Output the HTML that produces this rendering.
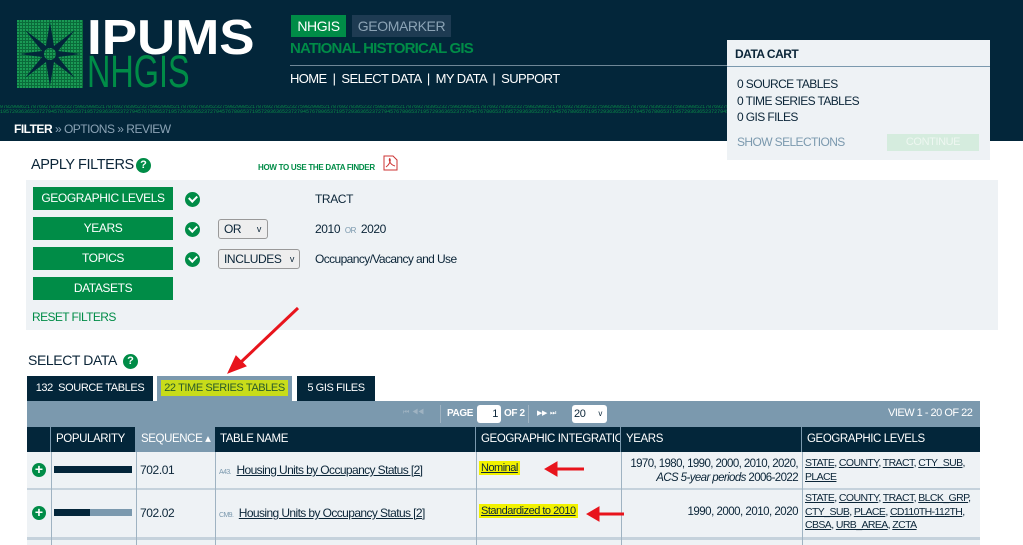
<!DOCTYPE html>
<html><head><meta charset="utf-8"><style>
*{margin:0;padding:0;box-sizing:border-box}
body{width:1023px;height:545px;overflow:hidden;background:#fff;font-family:"Liberation Sans",sans-serif;position:relative;color:#0b2538;letter-spacing:-0.4px}
.a{position:absolute;white-space:nowrap}
.hdr{left:0;top:0;width:1023px;height:141px;background:#03263a}
.btn{background:#008c47;color:#fff;font-size:12px;text-align:center;line-height:23px;width:140px;height:23px;left:33px}
.chk{width:15px;height:15px;border-radius:50%;background:#008c47;left:185px}
.chk:after{content:"";position:absolute;left:4px;top:3px;width:6px;height:4px;border-left:2px solid #fff;border-bottom:2px solid #fff;transform:rotate(-45deg)}
.sel{border:1px solid #999;border-radius:3px;background:#eee;font-size:12px;padding-left:5px;line-height:18px;height:20px}
.th{background:#03263a;color:#fff;font-size:11.5px;line-height:25px;padding-left:5px;top:427px;height:25px;border-right:1px solid #7b99ae;overflow:hidden}
.u{text-decoration:underline;color:#0b2538}
.plus{width:14px;height:14px;border-radius:50%;background:#008c47;color:#fff;font-size:14px;line-height:13px;text-align:center;font-weight:bold;left:32px;letter-spacing:0}
.hl{background:#f2f200;padding:1px 2px}
.lv{font-size:10.5px;letter-spacing:-0.6px;line-height:13.5px}
</style></head><body>
<div class="a hdr"></div>
<svg class="a" style="left:17px;top:20px" width="66" height="68">
<defs><pattern id="p" width="3" height="3" patternUnits="userSpaceOnUse"><rect width="3" height="3" fill="#0a6b3a"/><rect width="2" height="2" fill="#1a9a55"/></pattern></defs>
<rect width="66" height="68" fill="url(#p)"/>
<path d="M33 2 L37 26 L58 10 L41 31 L64 34 L41 37 L58 58 L37 42 L33 66 L29 42 L8 58 L25 37 L2 34 L25 31 L8 10 L29 26Z" fill="#03263a"/>
<circle cx="33" cy="34" r="6" fill="url(#p)"/>
</svg>
<div class="a" style="left:87px;top:14px;font-weight:bold;font-size:49px;line-height:48px;color:#fff;letter-spacing:0;transform:scaleX(1.08);transform-origin:left">IPUMS</div>
<div class="a" style="left:87px;top:49px;font-size:45px;line-height:46px;color:#008c47;letter-spacing:0;transform:scaleX(0.72);transform-origin:left">NHGIS</div>
<div class="a" style="left:291px;top:15px;width:55px;height:22px;background:#008c47;color:#fff;font-size:14px;line-height:22px;text-align:center">NHGIS</div>
<div class="a" style="left:352px;top:15px;width:99px;height:22px;background:#1e3b52;color:#8ba3b5;font-size:14px;line-height:22px;text-align:center">GEOMARKER</div>
<div class="a" style="left:290px;top:39px;font-size:15px;font-weight:bold;color:#008c47;line-height:20px;letter-spacing:-0.8px">NATIONAL HISTORICAL GIS</div>
<div class="a" style="left:290px;top:65px;width:440px;height:1px;background:#6f8797"></div>
<div class="a" style="left:290px;top:70px;font-size:13px;color:#fff;line-height:18px;letter-spacing:-0.6px">HOME &nbsp;|&nbsp; SELECT DATA &nbsp;|&nbsp; MY DATA &nbsp;|&nbsp; SUPPORT</div>
<div class="a" style="left:0;top:105px;width:1023px;height:12px;overflow:hidden;font-family:'Liberation Mono',monospace;font-size:5px;line-height:5px;color:#0a8a47;letter-spacing:0">9782908621787692783952327598290852178769278395232759829085217876927839523275982908521787692783952327598290852178769278395232759829085217876927839523275982908521787692783952327598290852178769278395232759829085217876927839523275982908521787692783952327598290852178769278395232759829085217876927<br>1957293636523727945767806537195729363652372794576780653719572936365237279457678065371957293636523727945767806537195729363652372794576780653719572936365237279457678065371957293636523727945767806537195729363652372794576780653719572936365237279457678065371957293636523727945767806</div>
<div class="a" style="left:14px;top:120px;font-size:12px;color:#8ba3b5;line-height:18px;letter-spacing:-0.5px"><b style="color:#fff">FILTER</b> » OPTIONS » REVIEW</div>
<div class="a" style="left:727px;top:40px;width:263px;height:120px;background:#eef2f5">
<div class="a" style="left:8px;top:7px;font-size:12px;font-weight:bold;letter-spacing:-0.5px">DATA CART</div>
<div class="a" style="left:0;top:26px;width:263px;height:1px;background:#7b99ae"></div>
<div class="a" style="left:10px;top:36px;font-size:12px;line-height:16.5px;letter-spacing:-0.6px">0 SOURCE TABLES<br>0 TIME SERIES TABLES<br>0 GIS FILES</div>
<div class="a" style="left:10px;top:95px;font-size:12px;color:#7b99ae;letter-spacing:-0.6px">SHOW SELECTIONS</div>
<div class="a" style="left:160px;top:94px;width:92px;height:17px;background:#d5ecde;color:#eef7f1;font-size:11px;text-align:center;line-height:17px">CONTINUE</div>
</div>
<div class="a" style="left:31px;top:157px;font-size:14.5px;color:#0b2538;letter-spacing:-0.4px">APPLY FILTERS</div>
<div class="a" style="left:136px;top:158px;width:15px;height:15px;border-radius:50%;background:#008c47;color:#fff;font-size:11px;font-weight:bold;text-align:center;line-height:15px;letter-spacing:0">?</div>
<div class="a" style="left:258px;top:163px;font-size:8px;color:#008c47;font-weight:bold;letter-spacing:-0.3px">HOW TO USE THE DATA FINDER</div>
<svg class="a" style="left:383px;top:155px" width="15" height="16"><path d="M1 1h9l4 4v10H1z" fill="#fff" stroke="#c33"/><path d="M3 12c3-2 5-6 4-8s-2 5 5 7" fill="none" stroke="#c33"/></svg>
<div class="a" style="left:26px;top:180px;width:972px;height:150px;background:#eef2f5"></div>
<div class="a btn" style="top:187px">GEOGRAPHIC LEVELS</div>
<div class="a btn" style="top:217px">YEARS</div>
<div class="a btn" style="top:247px">TOPICS</div>
<div class="a btn" style="top:277px">DATASETS</div>
<div class="a chk" style="top:192px"></div>
<div class="a chk" style="top:222px"></div>
<div class="a chk" style="top:252px"></div>
<div class="a sel" style="left:218px;top:219px;width:50px">OR<span style="position:absolute;right:6px;font-size:9px">v</span></div>
<div class="a sel" style="left:218px;top:249px;width:82px">INCLUDES<span style="position:absolute;right:5px;font-size:9px">v</span></div>
<div class="a" style="left:315px;top:192px;font-size:12px">TRACT</div>
<div class="a" style="left:315px;top:222px;font-size:12px">2010 <span style="font-size:8px;color:#7b99ae">&nbsp;OR&nbsp;</span> 2020</div>
<div class="a" style="left:315px;top:252px;font-size:12px;letter-spacing:-0.6px">Occupancy/Vacancy and Use</div>
<div class="a" style="left:32px;top:310px;font-size:12px;color:#008c47;letter-spacing:-0.6px">RESET FILTERS</div>
<div class="a" style="left:28px;top:352px;font-size:14px;letter-spacing:-0.4px">SELECT DATA</div>
<div class="a" style="left:123px;top:354px;width:15px;height:15px;border-radius:50%;background:#008c47;color:#fff;font-size:11px;font-weight:bold;text-align:center;line-height:15px;letter-spacing:0">?</div>
<div class="a" style="left:27px;top:376px;width:126px;height:25px;background:#03263a;color:#fff;font-size:11px;line-height:25px;text-align:center">132 &nbsp;SOURCE TABLES</div>
<div class="a" style="left:157px;top:376px;width:135px;height:25px;background:#7b99ae;font-size:11px;line-height:25px;text-align:center"><span style="background:#c8dc1a;color:#2a5a2a;padding:2px 3px">22 TIME SERIES TABLES</span></div>
<div class="a" style="left:297px;top:376px;width:78px;height:25px;background:#03263a;color:#fff;font-size:11px;line-height:25px;text-align:center">5 GIS FILES</div>
<div class="a" style="left:27px;top:401px;width:953px;height:26px;background:#7b99ae"></div>
<div class="a" style="left:403px;top:409px;font-size:7px;color:#9fb3c2">⏮ &nbsp;◀◀</div>
<div class="a" style="left:440px;top:405px;width:1px;height:18px;background:#9fb3c2"></div>
<div class="a" style="left:447px;top:408px;font-size:10px;color:#fff;font-weight:bold">PAGE</div>
<div class="a" style="left:477px;top:405px;width:24px;height:18px;background:#fff;border-radius:3px;font-size:11px;text-align:right;padding-right:3px;line-height:18px">1</div>
<div class="a" style="left:504px;top:408px;font-size:10px;color:#fff;font-weight:bold">OF 2</div>
<div class="a" style="left:528px;top:405px;width:1px;height:18px;background:#9fb3c2"></div>
<div class="a" style="left:537px;top:409px;font-size:7px;color:#fff">▶▶ &nbsp;⏭</div>
<div class="a" style="left:572px;top:405px;width:35px;height:18px;background:#fff;border-radius:3px;font-size:11px;line-height:18px;padding-left:2px">20<span style="position:absolute;right:5px;font-size:8px">v</span></div>
<div class="a" style="left:888px;top:407px;font-size:11px;color:#fff;letter-spacing:-0.5px">VIEW 1 - 20 OF 22</div>
<div class="a th" style="left:27px;width:24px"></div>
<div class="a th" style="left:51px;width:85px">POPULARITY</div>
<div class="a th" style="left:136px;width:79px;background:#7b99ae">SEQUENCE ▴</div>
<div class="a th" style="left:215px;width:261px">TABLE NAME</div>
<div class="a th" style="left:476px;width:145px">GEOGRAPHIC INTEGRATION</div>
<div class="a th" style="left:621px;width:181px">YEARS</div>
<div class="a th" style="left:802px;width:178px;border-right:none">GEOGRAPHIC LEVELS</div>
<div class="a" style="left:27px;top:452px;width:953px;height:36px;background:#eef2f5"></div>
<div class="a" style="left:27px;top:488px;width:953px;height:2px;background:#c5d2dc"></div>
<div class="a" style="left:27px;top:490px;width:953px;height:47px;background:#eef2f5"></div>
<div class="a" style="left:27px;top:537px;width:953px;height:3px;background:#c5d2dc"></div>
<div class="a" style="left:27px;top:540px;width:953px;height:5px;background:#eef2f5"></div>
<div class="a" style="left:51px;top:452px;width:1px;height:93px;background:#9fb3c2"></div>
<div class="a" style="left:136px;top:452px;width:1px;height:93px;background:#9fb3c2"></div>
<div class="a" style="left:215px;top:452px;width:1px;height:93px;background:#9fb3c2"></div>
<div class="a" style="left:476px;top:452px;width:1px;height:93px;background:#9fb3c2"></div>
<div class="a" style="left:621px;top:452px;width:1px;height:93px;background:#9fb3c2"></div>
<div class="a" style="left:802px;top:452px;width:1px;height:93px;background:#9fb3c2"></div>
<div class="a plus" style="top:463px">+</div>
<div class="a plus" style="top:506px">+</div>
<div class="a" style="left:54px;top:466px;width:78px;height:7px;background:#03263a"></div>
<div class="a" style="left:54px;top:509px;width:78px;height:7px;background:#7b99ae"></div>
<div class="a" style="left:54px;top:509px;width:36px;height:7px;background:#03263a"></div>
<div class="a" style="left:140px;top:463px;font-size:12px">702.01</div>
<div class="a" style="left:140px;top:506px;font-size:12px">702.02</div>
<div class="a" style="left:219px;top:463px;font-size:12px;letter-spacing:-0.6px"><span style="font-size:7px;color:#7b99ae">A43.</span>&nbsp; <span class="u">Housing Units by Occupancy Status [2]</span></div>
<div class="a" style="left:219px;top:506px;font-size:12px;letter-spacing:-0.6px"><span style="font-size:7px;color:#7b99ae">CM9.</span>&nbsp; <span class="u">Housing Units by Occupancy Status [2]</span></div>
<div class="a" style="left:479px;top:462px;font-size:11px;letter-spacing:-0.5px"><span class="hl u">Nominal</span></div>
<div class="a" style="left:479px;top:505px;font-size:11px;letter-spacing:-0.5px"><span class="hl u">Standardized to 2010</span></div>
<div class="a" style="left:621px;top:457px;width:177px;text-align:right;font-size:11.5px;line-height:14px;letter-spacing:-0.6px">1970, 1980, 1990, 2000, 2010, 2020,<br><i>ACS 5-year periods</i> 2006-2022</div>
<div class="a" style="left:621px;top:506px;width:177px;text-align:right;font-size:11.5px;letter-spacing:-0.5px">1990, 2000, 2010, 2020</div>
<div class="a lv" style="left:805px;top:457px"><span class="u">STATE</span>, <span class="u">COUNTY</span>, <span class="u">TRACT</span>, <span class="u">CTY_SUB</span>,<br><span class="u">PLACE</span></div>
<div class="a lv" style="left:805px;top:492px"><span class="u">STATE</span>, <span class="u">COUNTY</span>, <span class="u">TRACT</span>, <span class="u">BLCK_GRP</span>,<br><span class="u">CTY_SUB</span>, <span class="u">PLACE</span>, <span class="u">CD110TH-112TH</span>,<br><span class="u">CBSA</span>, <span class="u">URB_AREA</span>, <span class="u">ZCTA</span></div>
<svg class="a" style="left:0;top:0" width="1023" height="545">
<g stroke="#e8141c" stroke-width="3" fill="#e8141c">
<line x1="298" y1="308" x2="240" y2="363"/><polygon points="228,373 236,356 246,366" stroke-width="1"/>
<line x1="584" y1="469" x2="556" y2="469"/><polygon points="545,469 557,462 557,476" stroke-width="1"/>
<line x1="624" y1="514" x2="598" y2="514"/><polygon points="587,514 599,507 599,521" stroke-width="1"/>
</g></svg>
</body></html>
